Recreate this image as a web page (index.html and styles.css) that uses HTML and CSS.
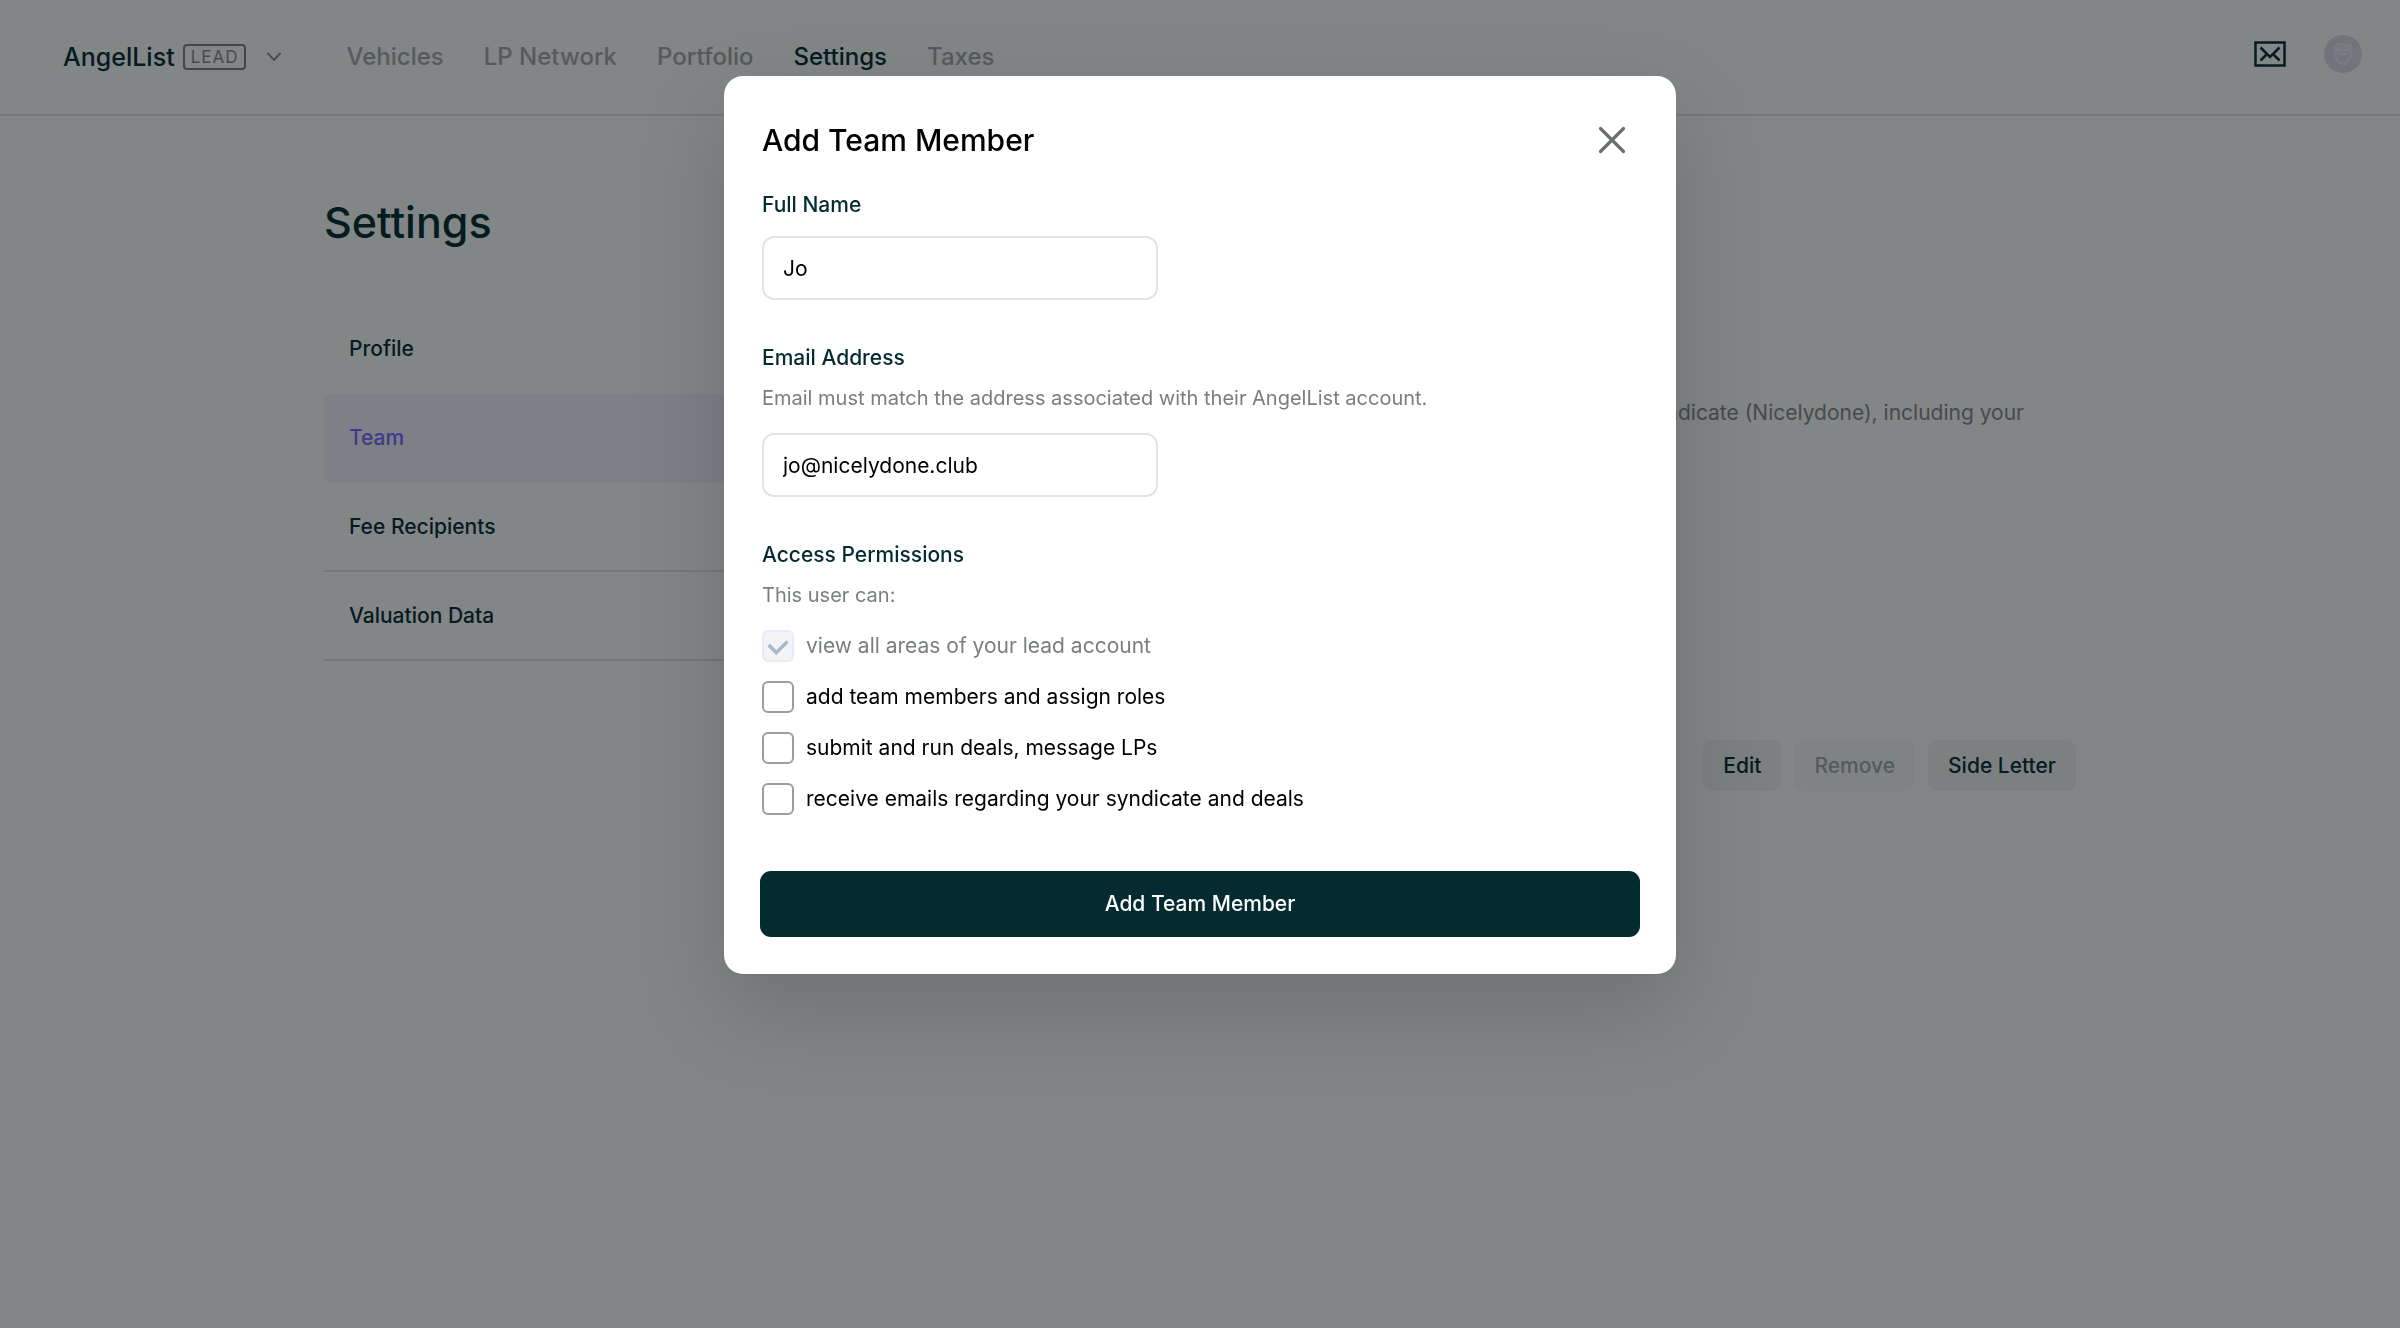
FILE: index.html
```html
<!DOCTYPE html>
<html lang="en">
<head>
<meta charset="utf-8">
<title>AngelList – Settings</title>
<link rel="stylesheet" href="styles.css">
</head>
<body>
<header class="topbar">
  <button class="brand" type="button">
    <span class="brand-name">AngelList</span>
    <span class="brand-tag">LEAD</span>
    <svg class="chevron" width="16" height="10" viewBox="0 0 16 10" fill="none" stroke="currentColor" stroke-width="2" stroke-linecap="round" stroke-linejoin="round"><path d="M2 1.500l6 6.500 6-6.500"/></svg>
  </button>
  <nav class="nav">
    <a href="#">Vehicles</a>
    <a href="#">LP Network</a>
    <a href="#">Portfolio</a>
    <a href="#" class="is-active">Settings</a>
    <a href="#">Taxes</a>
  </nav>
  <div class="tools">
    <a href="#" aria-label="Messages"><svg width="32" height="26" viewBox="0 0 32 26" fill="none" stroke="currentColor" stroke-width="2.500"><rect x="1.500" y="1.500" width="29" height="23"/><path d="M6.500 6.500l6.500 6.500 3 3 3-3L25.500 6.500M6.500 19.500l5.500-5.500M25.500 19.500l-5.500-5.500"/></svg></a>
    <a href="#" aria-label="Account"><svg width="38" height="38" viewBox="0 0 38 38" fill="none" stroke="#f2f1f6" stroke-width="1.500"><circle cx="19" cy="19" r="19" fill="#dcdbe6" stroke="none"/><ellipse cx="19" cy="12.500" rx="9" ry="3.500"/><ellipse cx="19" cy="13" rx="5.500" ry="1.500"/><path d="M12 16c-2 3-2 6 .500 7 1 4 3.500 6 6.500 6s5.500-2 6.500-6c2.500-1 2.500-4 .500-7M13 18c3 2 9 2 12 0"/></svg></a>
  </div>
</header>

<main class="page">
  <h1>Settings</h1>
  <div class="columns">
    <nav class="side">
      <a href="#">Profile</a>
      <a href="#" class="is-active">Team</a>
      <a href="#">Fee Recipients</a>
      <a href="#">Valuation Data</a>
    </nav>
    <section class="team">
      <p>syndicate (Nicelydone), including your</p>
      <div class="actions">
        <button type="button">Edit</button>
        <button type="button" disabled>Remove</button>
        <button type="button">Side Letter</button>
      </div>
    </section>
  </div>
</main>

<div class="overlay">
  <form class="modal" role="dialog" aria-labelledby="modal-title">
    <div class="modal-head">
      <h2 id="modal-title">Add Team Member</h2>
      <button class="close" type="button" aria-label="Close"><svg width="28" height="28" viewBox="0 0 28 28" fill="none" stroke="currentColor" stroke-width="3.200" stroke-linecap="round"><path d="M2.500 2.500l23 23M25.500 2.500l-23 23"/></svg></button>
    </div>
    <div class="field">
      <label for="name">Full Name</label>
      <input id="name" type="text" value="Jo">
    </div>
    <div class="field">
      <label for="email">Email Address</label>
      <p class="hint">Email must match the address associated with their AngelList account.</p>
      <input id="email" type="email" value="jo@nicelydone.club">
    </div>
    <fieldset>
      <legend>Access Permissions</legend>
      <p class="hint">This user can:</p>
      <label class="check is-disabled"><input type="checkbox" checked disabled><span>view all areas of your lead account</span></label>
      <label class="check"><input type="checkbox"><span>add team members and assign roles</span></label>
      <label class="check"><input type="checkbox"><span>submit and run deals, message LPs</span></label>
      <label class="check"><input type="checkbox"><span>receive emails regarding your syndicate and deals</span></label>
    </fieldset>
    <button class="submit" type="submit">Add Team Member</button>
  </form>
</div>
</body>
</html>
```

FILE: styles.css
```css
* { box-sizing: border-box; }

body {
  margin: 0;
  min-height: 100vh;
  background: #fff;
  color: #032b30;
  font: 400 21px/32px Inter, "Liberation Sans", sans-serif;
}

h1, h2, p, fieldset { margin: 0; }
a { color: inherit; text-decoration: none; }
button, input { font: inherit; color: inherit; }
button { border: 0; background: none; padding: 0; }
svg { display: block; }

.topbar {
  display: flex;
  align-items: center;
  height: 116px;
  padding: 0 38px 0 63px;
  border-bottom: 2px solid #e3e3e3;
}
.brand { display: flex; align-items: center; gap: 8px; }
.brand-name { font-size: 25px; font-weight: 500; }
.brand-tag {
  padding: 0 6px;
  border: 2px solid #7c8086;
  border-radius: 4px;
  color: #85898e;
  font-size: 17px;
  line-height: 22px;
  letter-spacing: 1px;
}
.chevron { margin-left: 12px; color: #8d9194; }
.nav {
  display: flex;
  gap: 40px;
  margin-left: 64px;
  color: #a5a8a8;
  font-size: 24px;
  font-weight: 500;
}
.nav .is-active { color: #032b30; }
.tools {
  display: flex;
  align-items: center;
  gap: 38px;
  margin-left: auto;
  padding-bottom: 6px;
}

.page {
  max-width: 1752px;
  margin: 0 auto;
  padding-top: 80px;
}
h1 { font-size: 43px; font-weight: 500; line-height: 52px; }
.columns {
  display: grid;
  grid-template-columns: 3fr 7fr;
  gap: 64px;
  margin-top: 57px;
}
.side { font-weight: 500; }
.side a {
  display: block;
  padding: 28px 25px 27px;
  border-bottom: 2px solid #e3e3e3;
}
.side a:first-child { border-color: transparent; }
.side .is-active {
  border-color: transparent;
  border-radius: 8px;
  background: #f4f2ff;
  color: #7767ff;
}
.team { padding-top: 92px; }
.team p { padding-right: 52px; color: #84888a; text-align: right; }
.actions {
  display: flex;
  justify-content: flex-end;
  gap: 13px;
  margin-top: 311px;
}
.actions button {
  padding: 10px 20px 9px;
  border-radius: 9px;
  background: #f4f2f2;
  font-weight: 500;
}
.actions button:disabled { opacity: .4; }

.overlay {
  position: fixed;
  inset: 0;
  display: flex;
  justify-content: center;
  align-items: flex-start;
  padding: 76px 24px;
  background: rgba(5, 14, 15, .5);
  overflow: auto;
}
.modal {
  display: flex;
  flex-direction: column;
  width: 100%;
  max-width: 952px;
  padding: 38px 36px 37px;
  border-radius: 19px;
  background: #fff;
  color: #000;
  box-shadow: 0 36px 92px rgba(0, 0, 0, .17);
}
.modal-head {
  display: flex;
  justify-content: space-between;
  align-items: center;
  padding: 0 14px 0 2px;
}
h2 { font-size: 30px; font-weight: 500; line-height: 52px; }
.close { color: #6d7171; }
.field { display: flex; flex-direction: column; padding: 23px 2px 0; }
.field label, legend { color: #032b30; font-weight: 500; }
.field input {
  width: 396px;
  height: 64px;
  margin-top: 15px;
  padding: 0 19px;
  border: 2px solid #e3e3e3;
  border-radius: 12px;
  background: #fff;
}
.field + .field, fieldset { padding-top: 42px; }
.hint { clear: both; padding-top: 8px; color: #7a7e7e; font-size: 20px; }
.field .hint { padding-bottom: 4px; }
fieldset { padding: 42px 2px 0; border: 0; }
legend { float: left; width: 100%; padding: 0; }
.check { display: flex; align-items: center; gap: 12px; margin-top: 19px; }
.check input {
  appearance: none;
  display: grid;
  place-items: center;
  width: 32px;
  height: 32px;
  margin: 0;
  border: 2px solid #9a9e9e;
  border-radius: 6px;
  background: #fff;
}
.check.is-disabled { color: #7a7e7e; }
.check input:disabled { border-color: #ebe8fb; background: #f3f3f4; }
.check input:checked::after {
  content: "";
  width: 14px;
  height: 9px;
  border: solid #a9b8ca;
  border-width: 0 0 4px 4px;
  border-radius: 1px;
  transform: translateY(-2px) rotate(-45deg);
}
.submit {
  margin-top: 56px;
  padding: 17px;
  border-radius: 11px;
  background: #032b30;
  color: #fff;
  font-weight: 500;
}
```
